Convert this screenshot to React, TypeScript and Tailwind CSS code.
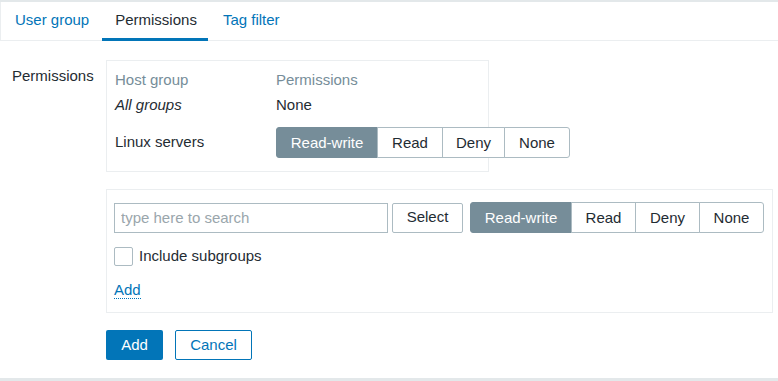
import React, { useState } from 'react';

const levels = ['Read-write', 'Read', 'Deny', 'None'];

interface SegmentProps {
  value: string;
  onChange: (v: string) => void;
  widths: string[];
}

// Radio-like button group used for permission levels
const Segmented = ({ value, onChange, widths }: SegmentProps) => (
  <div className="flex h-[31px] shrink-0">
    {levels.map((lvl, i) => {
      const selected = value === lvl;
      return (
        <button
          key={lvl}
          type="button"
          onClick={() => onChange(lvl)}
          className={`${widths[i]} h-full shrink-0 border text-[15px] leading-none ${
            i === 0 ? 'rounded-l-[3px]' : '-ml-px'
          } ${i === levels.length - 1 ? 'rounded-r-[3px]' : ''} ${
            selected
              ? 'bg-[#768d99] border-[#768d99] text-white'
              : 'bg-white border-[#acbbc2] text-[#1f2c33]'
          }`}
        >
          {lvl}
        </button>
      );
    })}
  </div>
);

export default function App() {
  const [tab, setTab] = useState('Permissions');
  const [linux, setLinux] = useState('Read-write');
  const [newLevel, setNewLevel] = useState('Read-write');
  const [search, setSearch] = useState('');
  const [subgroups, setSubgroups] = useState(false);

  const tabs = ['User group', 'Permissions', 'Tag filter'];

  return (
    <div className="w-[778px] h-[381px] bg-white text-[#1f2c33] text-[15px] font-['Liberation_Sans',Arial,sans-serif] flex flex-col overflow-hidden">
      <div className="h-[2px] bg-[#e3e8ea]" />

      {/* Tabs */}
      <div className="h-[39px] flex border-b border-[#ebeef0] border-l pl-px">
        {tabs.map((t) => (
          <button
            key={t}
            type="button"
            onClick={() => setTab(t)}
            className={`relative px-[13px] h-full flex items-center pb-px ${
              tab === t ? 'text-[#1f2c33]' : 'text-[#0275b8]'
            }`}
          >
            {t}
            {tab === t && <span className="absolute left-0 right-[2px] -bottom-px h-[3px] bg-[#0275b8]" />}
          </button>
        ))}
      </div>

      <div className="flex-1 flex flex-col">
        <div className="flex pt-[19px]">
          <div className="w-[106px] shrink-0 pl-[12px] leading-[17px] pt-[7px]">Permissions</div>
          <div className="flex-1 flex flex-col">
            {/* Existing permissions table */}
            <div className="w-[383px] border border-[#ebeef0] pl-[8px] pt-[6px] pb-[13px]">
              <div className="flex h-[26px] items-center text-[#768d99]">
                <div className="w-[161px] shrink-0">Host group</div>
                <div>Permissions</div>
              </div>
              <div className="flex h-[24px] items-center">
                <div className="w-[161px] shrink-0 italic">All groups</div>
                <div>None</div>
              </div>
              <div className="flex items-center pt-[10px]">
                <div className="w-[161px] shrink-0 whitespace-nowrap">Linux servers</div>
                <Segmented
                  value={linux}
                  onChange={setLinux}
                  widths={['w-[102px]', 'w-[66px]', 'w-[63px]', 'w-[66px]']}
                />
              </div>
            </div>

            {/* Add new permission */}
            <div className="mt-[17px] w-[667px] border border-[#ebeef0] pl-[7px] pr-[7px] pt-[12px] h-[124px]">
              <div className="flex items-center">
                <input
                  value={search}
                  onChange={(e) => setSearch(e.target.value)}
                  placeholder="type here to search"
                  className="w-[274px] h-[30px] border border-[#acbbc2] px-[6px] text-[15px] outline-none placeholder:text-[#9aa6ac]"
                />
                <button
                  type="button"
                  className="ml-[4px] w-[71px] h-[30px] border border-[#acbbc2] rounded-[2px] bg-white"
                >
                  Select
                </button>
                <div className="ml-[7px]">
                  <Segmented
                    value={newLevel}
                    onChange={setNewLevel}
                    widths={['w-[102px]', 'w-[65px]', 'w-[65px]', 'w-[65px]']}
                  />
                </div>
              </div>
              <label className="flex items-center mt-[14px] h-[19px] cursor-pointer">
                <input
                  type="checkbox"
                  checked={subgroups}
                  onChange={(e) => setSubgroups(e.target.checked)}
                  className="sr-only"
                />
                <span className="w-[19px] h-[19px] border border-[#acbbc2] rounded-[2px] bg-white flex items-center justify-center text-[12px] text-[#0275b8]">
                  {subgroups ? '✓' : ''}
                </span>
                <span className="ml-[6px]">Include subgroups</span>
              </label>
              <div className="mt-[13px]">
                <a className="text-[#0275b8] border-b border-dotted border-[#0275b8] leading-[17px] cursor-pointer">Add</a>
              </div>
            </div>

            <div className="flex mt-[17px] gap-[12px]">
              <button type="button" className="w-[57px] h-[30px] bg-[#0275b8] text-white rounded-[2px]">
                Add
              </button>
              <button
                type="button"
                className="w-[77px] h-[30px] bg-white text-[#0275b8] border border-[#0275b8] rounded-[2px]"
              >
                Cancel
              </button>
            </div>
          </div>
        </div>
      </div>

      <div className="h-[3px] bg-[#e3e8ea]" />
    </div>
  );
}
